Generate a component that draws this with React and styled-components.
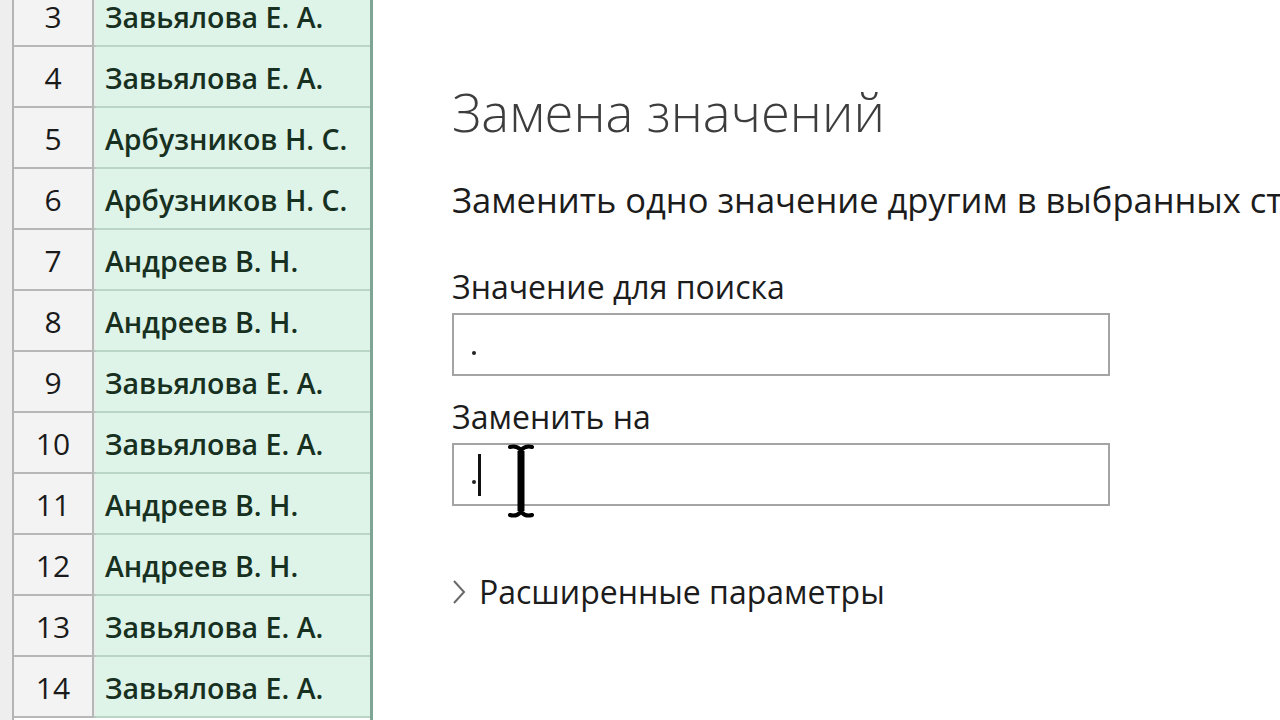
import React from "react";
import styled, { createGlobalStyle } from "styled-components";

const Global = createGlobalStyle`
  html, body { margin: 0; padding: 0; background: #ffffff; }
  body { width: 1280px; height: 720px; overflow: hidden; font-family: "Open Sans", "Noto Sans", sans-serif; }
`;

const Page = styled.div`
  display: flex;
  width: 1280px;
  height: 720px;
  overflow: hidden;
`;

const Sheet = styled.div`
  display: flex;
  flex: 0 0 auto;
  height: 720px;
  border-right: 3px solid #7fa594;
`;

const Gutter = styled.div`
  width: 12px;
  background: #eeeeee;
  border-right: 2px solid #b4b4b4;
`;

const Rows = styled.div`
  display: flex;
  flex-direction: column;
  margin-top: -14px;
`;

const Row = styled.div`
  display: flex;
  height: 61px;
  flex: 0 0 61px;
`;

const RowHead = styled.div`
  box-sizing: border-box;
  width: 80px;
  background: #f3f3f3;
  border-bottom: 2px solid #b7b7b7;
  border-right: 2px solid #b7b7b7;
  display: flex;
  align-items: center;
  justify-content: center;
  font-size: 30px;
  color: #1a1a1a;
  padding-top: 2px;
`;

const Spacer = styled.div`
  width: 2px;
  background: #e6efe9;
  border-bottom: 2px solid #b7c9bf;
`;

const NameCell = styled.div`
  box-sizing: border-box;
  width: 274px;
  background: #def4e8;
  border-bottom: 2px solid #bad5c6;
  display: flex;
  align-items: center;
  padding-left: 9px;
  font-size: 28.5px;
  font-weight: 600;
  color: #17301f;
  padding-top: 2px;
  white-space: nowrap;
`;

const Panel = styled.div`
  flex: 1 1 auto;
  padding: 81px 0 0 79px;
  white-space: nowrap;
  overflow: hidden;
`;

const Title = styled.h1`
  margin: 0;
  font-weight: 300;
  font-size: 52.5px;
  line-height: 62px;
  color: #3d3d3d;
`;

const Subtitle = styled.p`
  margin: 35px 0 0 0;
  font-size: 34.5px;
  line-height: 44px;
  color: #1c1c1c;
`;

const Label = styled.div`
  margin-top: ${(p) => p.$top}px;
  font-size: 32px;
  line-height: 42px;
  color: #1c1c1c;
`;

const Field = styled.div`
  position: relative;
  box-sizing: border-box;
  margin-top: 5px;
  width: 658px;
  height: 63px;
  border: 2px solid #a4a4a4;
  display: flex;
  align-items: center;
  padding-left: 18px;
  color: #111;
`;

const Dot = styled.span`
  display: inline-block;
  width: 4px;
  height: 4px;
  border-radius: 50%;
  background: #222;
  margin-top: ${(p) => p.$top}px;
`;

const Caret = styled.span`
  display: inline-block;
  width: 3px;
  height: 42px;
  background: #111;
  margin-left: 2px;
`;

const IBeam = styled.svg`
  position: absolute;
  left: 52px;
  top: -2px;
`;

const Advanced = styled.div`
  margin-top: 64px;
  display: flex;
  align-items: center;
  gap: 13px;
  font-size: 32px;
  line-height: 44px;
  color: #1c1c1c;
`;

const rows = [
  [3, "Завьялова Е. А."],
  [4, "Завьялова Е. А."],
  [5, "Арбузников Н. С."],
  [6, "Арбузников Н. С."],
  [7, "Андреев В. Н."],
  [8, "Андреев В. Н."],
  [9, "Завьялова Е. А."],
  [10, "Завьялова Е. А."],
  [11, "Андреев В. Н."],
  [12, "Андреев В. Н."],
  [13, "Завьялова Е. А."],
  [14, "Завьялова Е. А."],
];

export default function App() {
  return (
    <Page>
      <Global />
      <Sheet>
        <Gutter />
        <Rows>
          {rows.map(([n, name]) => (
            <Row key={n}>
              <RowHead>{n}</RowHead>
              <Spacer />
              <NameCell>{name}</NameCell>
            </Row>
          ))}
        </Rows>
      </Sheet>
      <Panel>
        <Title>Замена значений</Title>
        <Subtitle>Заменить одно значение другим в выбранных столбцах.</Subtitle>
        <Label $top={44}>Значение для поиска</Label>
        <Field>
          <Dot $top={16} />
        </Field>
        <Label $top={20}>Заменить на</Label>
        <Field>
          <Dot $top={14} />
          <Caret />
          <IBeam width="30" height="76" viewBox="0 0 30 76">
            <path
              d="M4 4 Q10 2 15 7 Q20 2 26 4 M15 7 V69 M4 72 Q10 74 15 69 Q20 74 26 72"
              fill="none"
              stroke="#000"
              strokeWidth="4"
              strokeLinecap="round"
            />
            <rect x="11.5" y="8" width="7" height="60" fill="#000" />
          </IBeam>
        </Field>
        <Advanced>
          <svg width="14" height="26" viewBox="0 0 14 26">
            <path d="M2 2 L12 13 L2 24" fill="none" stroke="#6a6a6a" strokeWidth="2" />
          </svg>
          Расширенные параметры
        </Advanced>
      </Panel>
    </Page>
  );
}
